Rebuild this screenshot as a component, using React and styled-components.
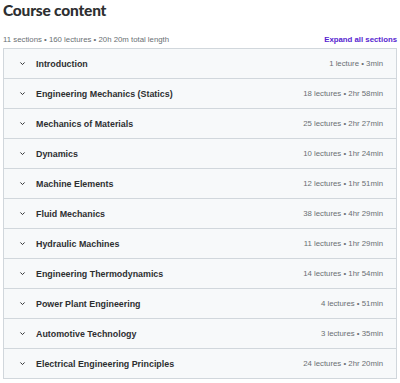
import React from "react";
import styled, { createGlobalStyle } from "styled-components";

const Global = createGlobalStyle`
  html, body {
    margin: 0;
    padding: 0;
    background: #ffffff;
    font-family: "Liberation Sans", Arial, sans-serif;
    color: #2d2f31;
  }
`;

const sections = [
  ["Introduction", "1 lecture • 3min"],
  ["Engineering Mechanics (Statics)", "18 lectures • 2hr 58min"],
  ["Mechanics of Materials", "25 lectures • 2hr 27min"],
  ["Dynamics", "10 lectures • 1hr 24min"],
  ["Machine Elements", "12 lectures • 1hr 51min"],
  ["Fluid Mechanics", "38 lectures • 4hr 29min"],
  ["Hydraulic Machines", "11 lectures • 1hr 29min"],
  ["Engineering Thermodynamics", "14 lectures • 1hr 54min"],
  ["Power Plant Engineering", "4 lectures • 51min"],
  ["Automotive Technology", "3 lectures • 35min"],
  ["Electrical Engineering Principles", "24 lectures • 2hr 20min"],
];

const Page = styled.div`
  padding: 0 3px;
  width: 394px;
`;

const Title = styled.h2`
  margin: 0;
  font-family: Lato, "Liberation Sans", sans-serif;
  font-size: 15.5px;
  font-weight: 900;
  line-height: 20px;
  letter-spacing: -0.2px;
`;

const Meta = styled.div`
  display: flex;
  justify-content: space-between;
  align-items: center;
  margin-top: 13px;
  height: 12px;
  font-size: 7.8px;
  color: #6a6f73;
`;

const Expand = styled.button`
  border: none;
  background: none;
  padding: 0;
  font-family: inherit;
  font-size: 7.8px;
  font-weight: 700;
  color: #5624d0;
  cursor: pointer;
`;

const Panel = styled.div`
  margin-top: 3px;
  border: 1px solid #d1d7dc;
  border-bottom: none;
`;

const Row = styled.div`
  display: flex;
  align-items: center;
  height: 29px;
  padding: 0 13px 0 15px;
  background: #f7f9fa;
  border-bottom: 1px solid #d1d7dc;
`;

const Chevron = styled.svg`
  width: 7px;
  height: 7px;
  margin-right: 10px;
  flex-shrink: 0;
`;

const Name = styled.span`
  flex: 1;
  font-size: 8.9px;
  font-weight: 700;
  color: #2d2f31;
`;

const Info = styled.span`
  font-size: 7.8px;
  color: #6a6f73;
`;

export default function App() {
  return (
    <Page>
      <Global />
      <Title>Course content</Title>
      <Meta>
        <span>11 sections • 160 lectures • 20h 20m total length</span>
        <Expand>Expand all sections</Expand>
      </Meta>
      <Panel>
        {sections.map(([name, info]) => (
          <Row key={name}>
            <Chevron viewBox="0 0 10 10">
              <path d="M2 3.5 L5 6.5 L8 3.5" fill="none" stroke="#2d2f31" strokeWidth="1.4" />
            </Chevron>
            <Name>{name}</Name>
            <Info>{info}</Info>
          </Row>
        ))}
      </Panel>
    </Page>
  );
}
